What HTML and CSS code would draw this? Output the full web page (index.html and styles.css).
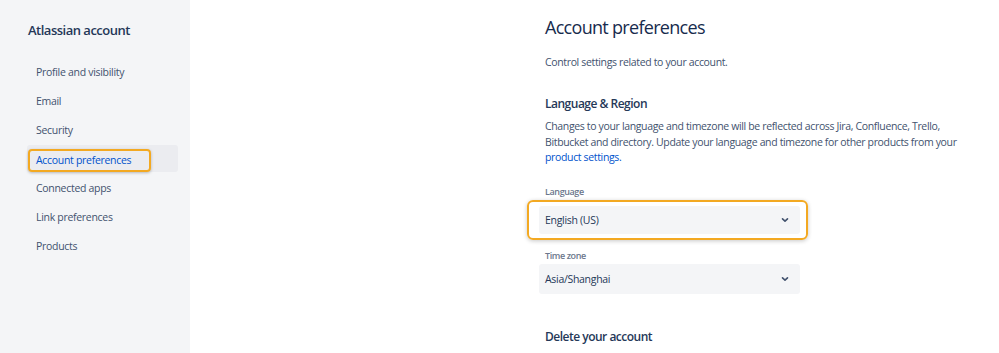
FILE: index.html
```html
<!DOCTYPE html>
<html lang="en">
<head>
    <meta charset="UTF-8">
    <meta name="viewport" content="width=device-width, initial-scale=1.0">
    <title>Account preferences</title>
    <link rel="stylesheet" href="styles.css">
</head>
<body>
    <div class="layout">
        <nav class="sidebar">
            <div class="sidebar-title">Atlassian account</div>
            <ul class="nav-list">
                <li class="nav-item">Profile and visibility</li>
                <li class="nav-item">Email</li>
                <li class="nav-item">Security</li>
                <li class="nav-item active"><span class="highlight">Account preferences</span></li>
                <li class="nav-item">Connected apps</li>
                <li class="nav-item">Link preferences</li>
                <li class="nav-item">Products</li>
            </ul>
        </nav>

        <main class="main">
            <div class="content">
                <h1 class="page-title">Account preferences</h1>
                <p class="intro">Control settings related to your account.</p>

                <h2 class="section-title">Language &amp; Region</h2>
                <p class="section-text">Changes to your language and timezone will be reflected across Jira, Confluence, Trello, Bitbucket and directory. Update your language and timezone for other products from your <a href="#" class="link">product settings.</a></p>

                <div class="field">
                    <label class="field-label">Language</label>
                    <div class="select-wrap highlighted">
                        <div class="select">
                            <span>English (US)</span>
                            <svg class="chevron" width="10" height="10" viewBox="0 0 10 10"><path d="M2.5 3.8 L5 6.2 L7.5 3.8" fill="none" stroke="#42526e" stroke-width="1.6" stroke-linecap="round" stroke-linejoin="round"/></svg>
                        </div>
                    </div>
                </div>

                <div class="field">
                    <label class="field-label">Time zone</label>
                    <div class="select-wrap plain">
                        <div class="select">
                            <span>Asia/Shanghai</span>
                            <svg class="chevron" width="10" height="10" viewBox="0 0 10 10"><path d="M2.5 3.8 L5 6.2 L7.5 3.8" fill="none" stroke="#42526e" stroke-width="1.6" stroke-linecap="round" stroke-linejoin="round"/></svg>
                        </div>
                    </div>
                </div>

                <h2 class="section-title delete-title">Delete your account</h2>
            </div>
        </main>
    </div>
</body>
</html>
```

FILE: styles.css
```css
body {
    margin: 0;
    font-family: "Open Sans", "Noto Sans", sans-serif;
    color: #172b4d;
    background: #fff;
    letter-spacing: -0.3px;
}

.layout {
    display: flex;
    height: 353px;
    overflow: hidden;
}

.sidebar {
    width: 190px;
    flex-shrink: 0;
    background: #f4f5f7;
    padding: 20px 12px 0 27px;
    box-sizing: border-box;
}

.sidebar-title {
    font-size: 13px;
    font-weight: 600;
    letter-spacing: -0.5px;
    color: #253858;
    padding-left: 1px;
    height: 20px;
    line-height: 20px;
}

.nav-list {
    list-style: none;
    margin: 18px 0 0;
    padding: 0;
}

.nav-item {
    height: 29px;
    line-height: 29px;
    font-size: 10.5px;
    color: #42526e;
    padding-left: 9px;
    border-radius: 3px;
    white-space: nowrap;
}

.nav-item.active {
    height: 27px;
    margin-bottom: 2px;
    background: #ebecf0;
    color: #0052cc;
    padding-left: 1px;
    display: flex;
    align-items: flex-end;
}

.highlight {
    display: block;
    border: 2px solid #f3a922;
    border-radius: 4px;
    padding: 0 18px 0 6px;
    height: 19px;
    line-height: 18px;
    box-shadow: 0 1px 3px rgba(0, 0, 0, 0.25);
}

.main {
    flex: 1;
}

.content {
    margin-left: 355px;
    width: 418px;
    padding-top: 14px;
}

.page-title {
    margin: 0;
    font-size: 18px;
    font-weight: 500;
    letter-spacing: -0.7px;
    line-height: 26px;
    color: #172b4d;
}

.intro {
    margin: 14px 0 0;
    font-size: 10.5px;
    letter-spacing: -0.35px;
    line-height: 16px;
    color: #42526e;
}

.section-title {
    margin: 25px 0 0;
    font-size: 12px;
    font-weight: 600;
    letter-spacing: -0.5px;
    line-height: 18px;
    color: #253858;
}

.section-text {
    margin: 6px 0 0;
    font-size: 10.5px;
    letter-spacing: -0.35px;
    line-height: 15.5px;
    color: #42526e;
}

.link {
    color: #0052cc;
    text-decoration: none;
}

.field {
    margin-top: 20px;
}

.field + .field {
    margin-top: 10px;
}

.field-label {
    display: block;
    font-size: 9px;
    font-weight: 600;
    letter-spacing: -0.4px;
    color: #6b778c;
    line-height: 12px;
}

.select-wrap {
    margin: 2px 0 0 -18px;
    padding: 4px 6px 4px 10px;
    width: 261px;
    border: 2px solid transparent;
    border-radius: 6px;
}

.select-wrap.highlighted {
    border-color: #f3a922;
    box-shadow: 0 1px 4px rgba(0, 0, 0, 0.22);
}

.select-wrap.plain {
    margin-top: 0;
    padding-top: 0;
}

.select {
    height: 28px;
    background: #f4f5f7;
    border-radius: 3px;
    display: flex;
    align-items: center;
    justify-content: space-between;
    padding: 0 10px 0 6px;
    font-size: 10.5px;
    color: #253858;
}

.plain .select {
    height: 30px;
}

.chevron {
    display: block;
}

.delete-title {
    margin-top: 28px;
}
```
